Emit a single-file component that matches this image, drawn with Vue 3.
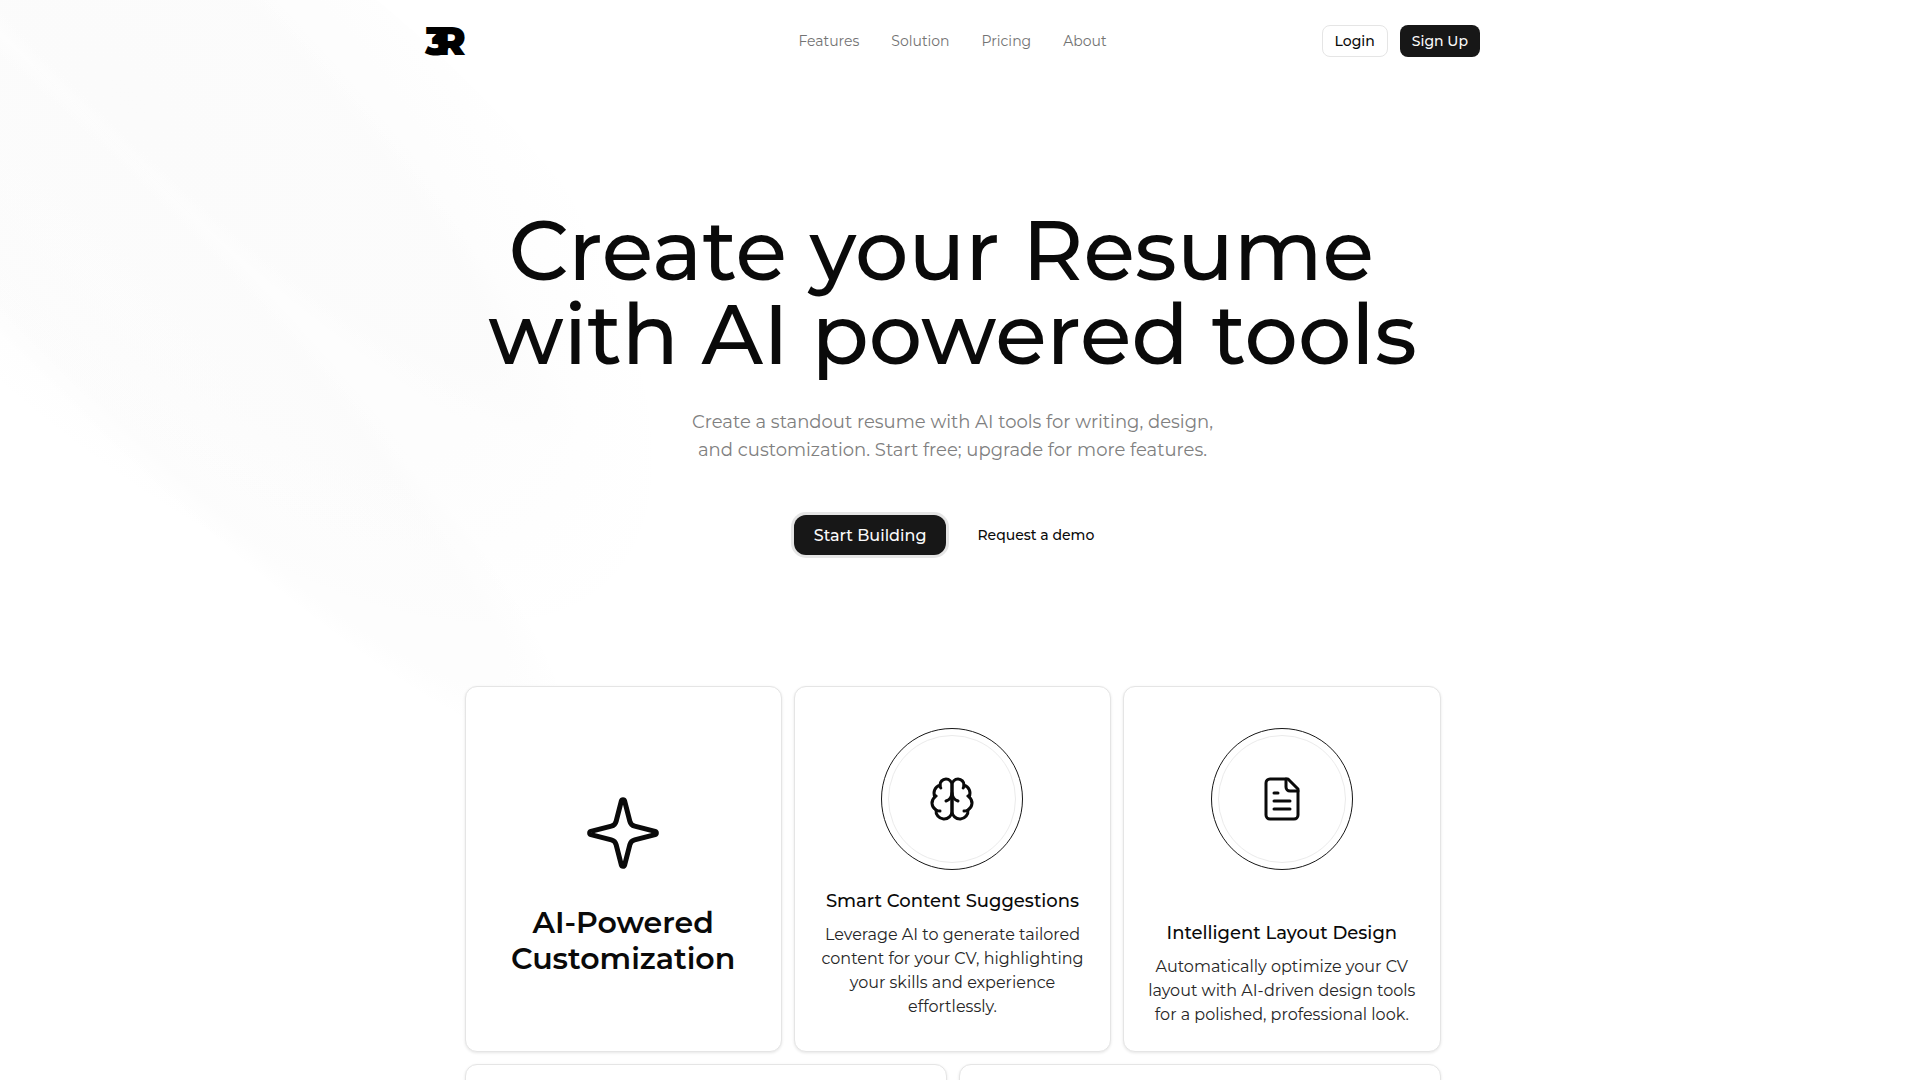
<script setup>
const links = ['Features', 'Solution', 'Pricing', 'About']

const features = [
  {
    title: 'Smart Content Suggestions',
    lines: ['Leverage AI to generate tailored', 'content for your CV, highlighting', 'your skills and experience', 'effortlessly.'],
    icon: [
      'M12 5a3 3 0 1 0-5.997.125 4 4 0 0 0-2.526 5.77 4 4 0 0 0 .556 6.588A4 4 0 1 0 12 18Z',
      'M12 5a3 3 0 1 1 5.997.125 4 4 0 0 1 2.526 5.77 4 4 0 0 1-.556 6.588A4 4 0 1 1 12 18Z',
      'M15 13a4.5 4.5 0 0 1-3-4 4.5 4.5 0 0 1-3 4',
      'M17.599 6.5a3 3 0 0 0 .399-1.375',
      'M6.003 5.125A3 3 0 0 0 6.401 6.5',
      'M3.477 10.896a4 4 0 0 1 .585-.396',
      'M19.938 10.5a4 4 0 0 1 .585.396',
      'M6 18a4 4 0 0 1-1.967-.516',
      'M19.967 17.484A4 4 0 0 1 18 18',
    ],
  },
  {
    title: 'Intelligent Layout Design',
    spaced: true,
    lines: ['Automatically optimize your CV', 'layout with AI-driven design tools', 'for a polished, professional look.'],
    icon: [
      'M15 2H6a2 2 0 0 0-2 2v16a2 2 0 0 0 2 2h12a2 2 0 0 0 2-2V7Z',
      'M14 2v4a2 2 0 0 0 2 2h4',
      'M10 9H8',
      'M16 13H8',
      'M16 17H8',
    ],
  },
]
</script>

<template>
  <div class="page">
    <div class="glow" aria-hidden="true">
      <span class="beam wide"></span>
      <span class="beam near"></span>
      <span class="beam far"></span>
    </div>

    <header class="header">
      <a href="#" class="brand" aria-label="Home">
        <svg width="41" height="28" viewBox="0 0 41 28">
          <text x="0" y="28" class="mark">3</text>
          <text x="11" y="28" class="mark">R</text>
        </svg>
      </a>
      <nav class="nav">
        <a v-for="link in links" :key="link" href="#">{{ link }}</a>
      </nav>
      <div class="account">
        <button type="button" class="btn outline">Login</button>
        <button type="button" class="btn dark">Sign Up</button>
      </div>
    </header>

    <main>
      <section class="hero">
        <h1>Create your Resume&nbsp;<br />with AI powered tools</h1>
        <p>Create a standout resume with AI tools for writing, design,<br />and customization. Start free; upgrade for more features.</p>
        <div class="actions">
          <div class="ring"><button type="button" class="btn start">Start Building</button></div>
          <button type="button" class="btn ghost">Request a demo</button>
        </div>
      </section>

      <section class="cards">
        <article class="card intro">
          <svg class="icon" width="80" height="80" viewBox="0 0 24 24">
            <path d="M9.937 15.5A2 2 0 0 0 8.5 14.063l-6.135-1.582a.5.5 0 0 1 0-.962L8.5 9.936A2 2 0 0 0 9.937 8.5l1.582-6.135a.5.5 0 0 1 .963 0L14.063 8.5A2 2 0 0 0 15.5 9.937l6.135 1.581a.5.5 0 0 1 0 .964L15.5 14.063a2 2 0 0 0-1.437 1.437l-1.582 6.135a.5.5 0 0 1-.963 0z" />
          </svg>
          <h2>AI-Powered<br />Customization</h2>
        </article>
        <article v-for="item in features" :key="item.title" class="card feature">
          <div class="circle">
            <div class="inner">
              <svg class="icon" width="48" height="48" viewBox="0 0 24 24">
                <path v-for="d in item.icon" :key="d" :d="d" />
              </svg>
            </div>
          </div>
          <div class="copy" :class="{ spaced: item.spaced }">
            <h3>{{ item.title }}</h3>
            <p><template v-for="line in item.lines" :key="line">{{ line }}<br /></template></p>
          </div>
        </article>
        <article class="card half"></article>
        <article class="card half"></article>
      </section>
    </main>
  </div>
</template>

<style>
body {
  margin: 0;
  background: #fff;
}
</style>

<style scoped>
.page {
  position: relative;
  box-sizing: border-box;
  height: 100vh;
  padding-right: 15px;
  overflow: hidden;
  background: #fff;
  color: #0a0a0a;
  font-family: Montserrat, Inter, sans-serif;
}

.glow {
  position: absolute;
  inset: 0;
  overflow: hidden;
  opacity: 0.65;
  pointer-events: none;
}

.beam {
  position: absolute;
  top: 0;
  left: 0;
  width: 224px;
  height: 1280px;
  border-radius: 50%;
}

.beam.wide {
  width: 560px;
  transform: translateY(-350px) rotate(-45deg);
  background: radial-gradient(68% 69% at 55% 31%, hsla(0, 0%, 85%, 0.08) 0, hsla(0, 0%, 55%, 0.02) 50%, hsla(0, 0%, 45%, 0) 80%);
}

.beam.near {
  transform: translate(5%, -50%) rotate(-45deg);
  background: radial-gradient(50% 50% at 50% 50%, hsla(0, 0%, 85%, 0.06) 0, hsla(0, 0%, 45%, 0.02) 80%, transparent 100%);
}

.beam.far {
  transform: translateY(-350px) rotate(-45deg);
  background: radial-gradient(50% 50% at 50% 50%, hsla(0, 0%, 85%, 0.04) 0, hsla(0, 0%, 45%, 0.02) 80%, transparent 100%);
}

.header {
  position: relative;
  display: grid;
  grid-template-columns: 1fr auto 1fr;
  align-items: center;
  box-sizing: border-box;
  max-width: 1055px;
  margin: 0 auto;
  padding: 25px 0;
}

.brand {
  display: flex;
}

.brand svg {
  overflow: visible;
}

.mark {
  fill: #000;
  font-size: 40px;
  font-weight: 900;
}

.nav {
  display: flex;
  gap: 32px;
  font-size: 14px;
  line-height: 20px;
}

.nav a {
  color: #737373;
  text-decoration: none;
}

.account {
  display: flex;
  justify-content: flex-end;
  gap: 12px;
}

.btn {
  box-sizing: border-box;
  height: 32px;
  padding: 0 12px;
  border: 0;
  border-radius: 8px;
  background: transparent;
  color: #0a0a0a;
  font: inherit;
  font-size: 14px;
  font-weight: 500;
  white-space: nowrap;
}

.outline {
  border: 1px solid #e5e5e5;
  background: #fff;
}

.dark,
.start {
  background: #171717;
  color: #fafafa;
}

.hero {
  position: relative;
  text-align: center;
}

.hero h1 {
  margin: 126px 0 0;
  font-size: 84px;
  font-weight: 500;
  line-height: 84px;
  white-space: nowrap;
}

.hero p {
  margin: 32px 0 0;
  color: #808080;
  font-size: 18px;
  line-height: 28px;
}

.actions {
  display: flex;
  justify-content: center;
  align-items: center;
  gap: 8px;
  margin-top: 48px;
}

.ring {
  padding: 3px;
  border-radius: 15px;
  background: #e5e5e5;
}

.start {
  height: 40px;
  padding: 0 20px;
  border-radius: 12px;
  font-size: 16px;
}

.ghost {
  height: 42px;
  padding: 0 20px;
}

.cards {
  position: relative;
  display: grid;
  grid-template-columns: repeat(6, 1fr);
  gap: 12px;
  max-width: 976px;
  margin: 128px auto 0;
}

.card {
  grid-column: span 2;
  display: flex;
  flex-direction: column;
  align-items: center;
  box-sizing: border-box;
  min-height: 366px;
  border: 1px solid #e5e5e5;
  border-radius: 12px;
  background: #fff;
  box-shadow: 0 1px 3px rgba(0, 0, 0, 0.1);
  text-align: center;
}

.card.half {
  grid-column: span 3;
}

.icon {
  display: block;
  fill: none;
  stroke: #0a0a0a;
  stroke-width: 1.5;
  stroke-linecap: round;
  stroke-linejoin: round;
}

.intro {
  justify-content: flex-end;
  padding-bottom: 74px;
}

.intro h2 {
  margin: 32px 0 0;
  font-size: 30px;
  font-weight: 600;
  line-height: 36px;
}

.feature {
  padding: 41px 0 16px;
}

.circle {
  box-sizing: border-box;
  padding: 6px;
  border: 1px solid #171717;
  border-radius: 50%;
}

.inner {
  display: grid;
  place-items: center;
  width: 126px;
  height: 126px;
  border: 1px solid #ebebeb;
  border-radius: 50%;
}

.copy {
  margin-top: 17px;
}

.copy.spaced {
  margin-top: 49px;
}

.copy h3 {
  margin: 0;
  font-size: 18px;
  font-weight: 500;
  line-height: 28px;
}

.copy p {
  margin: 8px 0 0;
  color: #262626;
  font-size: 16px;
  line-height: 24px;
}
</style>
